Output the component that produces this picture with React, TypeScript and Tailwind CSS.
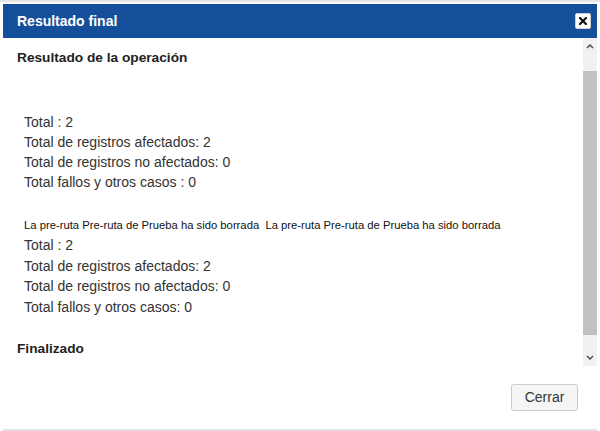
import React from 'react';

const firstBlock = [
  'Total : 2',
  'Total de registros afectados: 2',
  'Total de registros no afectados: 0',
  'Total fallos y otros casos : 0',
];

const secondBlock = [
  'Total : 2',
  'Total de registros afectados: 2',
  'Total de registros no afectados: 0',
  'Total fallos y otros casos: 0',
];

function CloseIcon() {
  return (
    <svg width="8" height="8" viewBox="0 0 8 8">
      <path d="M1 1 L7 7 M7 1 L1 7" stroke="#111" strokeWidth="2.2" strokeLinecap="square" />
    </svg>
  );
}

function FakeScrollbar() {
  return (
    <div className="w-[14px] shrink-0 bg-[#f1f1f1] flex flex-col items-center">
      <div className="h-[17px] flex items-center justify-center">
        <svg width="8" height="5" viewBox="0 0 8 5">
          <path d="M1 4 L4 1 L7 4" fill="none" stroke="#505050" strokeWidth="1.5" />
        </svg>
      </div>
      <div className="w-full flex-1 pt-[16px] pb-[14px]">
        <div className="w-full h-full bg-[#c1c1c1]" />
      </div>
      <div className="h-[17px] flex items-center justify-center">
        <svg width="8" height="5" viewBox="0 0 8 5">
          <path d="M1 1 L4 4 L7 1" fill="none" stroke="#505050" strokeWidth="1.5" />
        </svg>
      </div>
    </div>
  );
}

export default function App() {
  return (
    <div
      className="w-[600px] h-[431px] bg-white border-t-2 border-[#e3e3e3] pt-[2px] px-[3px] flex flex-col text-[#333]"
      style={{ fontFamily: '"Liberation Sans", Arial, sans-serif' }}
    >
      {/* header */}
      <div className="h-[34px] shrink-0 bg-[#154f9b] flex items-center justify-between pl-[14px] pr-[6px]">
        <span className="text-white font-bold text-[14px]">Resultado final</span>
        <button className="w-[16px] h-[16px] bg-white border border-[#cfcfcf] rounded-[2px] flex items-center justify-center">
          <CloseIcon />
        </button>
      </div>

      {/* body */}
      <div className="h-[328px] shrink-0 flex">
        <div className="flex-1 pl-[14px] pt-[10px]">
          <div className="font-bold text-[13.7px] leading-[20px] text-[#222]">Resultado de la operación</div>
          <div className="pl-[7px] mt-[44px] text-[14px] leading-[20px]">
            {firstBlock.map((line) => (
              <div key={line}>{line}</div>
            ))}
          </div>
          <div className="pl-[7px] mt-[25px] text-[11.25px] leading-[16px] text-[#111] whitespace-pre">
            {'La pre-ruta Pre-ruta de Prueba ha sido borrada  La pre-ruta Pre-ruta de Prueba ha sido borrada'}
          </div>
          <div className="pl-[7px] mt-[2px] text-[14px] leading-[20.5px]">
            {secondBlock.map((line) => (
              <div key={line}>{line}</div>
            ))}
          </div>
          <div className="mt-[22px] font-bold text-[13.7px] leading-[20px] text-[#222]">Finalizado</div>
        </div>
        <FakeScrollbar />
      </div>

      {/* footer */}
      <div className="flex-1 flex justify-end items-start pt-[18px] pr-[19px] border-b-2 border-[#e3e3e3]">
        <button className="w-[67px] h-[27px] bg-[#f5f5f5] border border-[#cccccc] rounded-[3px] text-[14px] text-[#333]">
          Cerrar
        </button>
      </div>
    </div>
  );
}
